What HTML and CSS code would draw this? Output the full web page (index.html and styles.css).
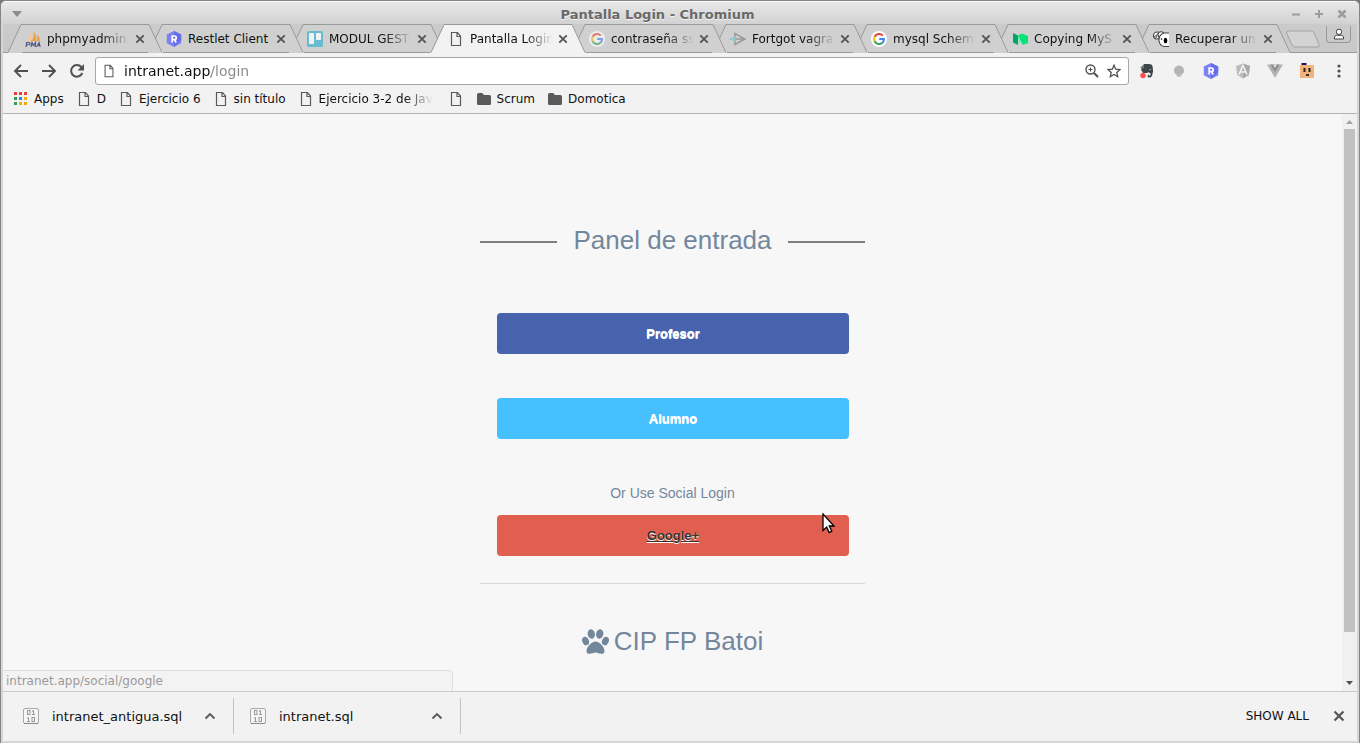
FILE: index.html
```html
<!DOCTYPE html>
<html lang="es">
<head>
<meta charset="utf-8">
<title>Pantalla Login - Chromium</title>
<link rel="stylesheet" href="styles.css">
</head>
<body>
<svg class="defs" aria-hidden="true">
  <symbol id="edge-left" viewBox="0 0 14 29"><path class="edge-fill" d="M0 29V28.500L13.500.5H14V29Z"/><path class="edge-line" d="M0 28.500L13 .5H14"/></symbol>
  <symbol id="edge-right" viewBox="0 0 14 29"><path class="edge-fill" d="M14 29V28.500L1 .5H0V29Z"/><path class="edge-line" d="M14 28.500L1 .5H0"/></symbol>
  <symbol id="close" viewBox="0 0 10 10"><path d="M1.300 1.300L8.700 8.700M8.700 1.300L1.300 8.700" fill="none" stroke="#555" stroke-width="1.900"/></symbol>
  <symbol id="file" viewBox="0 0 16 16"><path d="M3.500 1.500H9.500L12.500 5V14.500H3.500ZM9 1.500V5.500H12.500" fill="none" stroke="#5a5a5a" stroke-width="1.200"/></symbol>
  <symbol id="folder" viewBox="0 0 16 16"><path d="M1 3.500Q1 2 2.500 2H6.200L8 4H13.500Q15 4 15 5.500V12.500Q15 14 13.500 14H2.500Q1 14 1 12.500Z" fill="#5a5a5a"/></symbol>
  <symbol id="google" viewBox="0 0 16 16"><circle cx="8" cy="8" r="8" fill="#fff"/><g fill="none" stroke-width="2.100"><path d="M11.800 4.600A5 5 0 0 0 3.600 5.800" stroke="#ea4335"/><path d="M3.600 5.700A5 5 0 0 0 3.600 10.400" stroke="#fbbc05"/><path d="M3.600 10.300A5 5 0 0 0 11.400 11.700" stroke="#34a853"/><path d="M11.300 11.800A5 5 0 0 0 13 8H8.200" stroke="#4285f4"/></g></symbol>
  <symbol id="restlet" viewBox="0 0 16 16"><path d="M8 0L15.200 3.500V12.300L8 16L.8 12.300V3.500Z" fill="#7c81f4"/><path d="M8 0L15.200 3.500V9L8 16Z" fill="#666de9"/><path d="M6.200 11.500V5H8.500A1.600 1.600 0 0 1 8.500 8.500H6.200M8.300 8.500L10.200 11.500" fill="none" stroke="#fff" stroke-width="1.700"/></symbol>
  <symbol id="binary" viewBox="0 0 16 16"><rect x=".5" y=".5" width="15" height="15" rx="1.500" fill="#f5f5f5" stroke="#aaa"/><path d="M1 15.500H15" stroke="#888"/><g fill="none" stroke="#999"><rect x="4.500" y="2.500" width="2.500" height="4"/><path d="M9 3.500L10.500 2.500V6.500M9 6.500H12"/><path d="M4 10.500L5.500 9.500V13.500M4 13.500H7"/><rect x="9" y="9.500" width="2.500" height="4"/></g></symbol>
  <symbol id="chevron" viewBox="0 0 12 8"><path d="M1.500 6.500L6 2L10.500 6.500" fill="none" stroke="#5a5a5a" stroke-width="1.900"/></symbol>
</svg>
<div class="window">
  <header class="titlebar">
    <button class="wm" aria-label="Window menu"><svg width="10" height="6" viewBox="0 0 10 6"><path d="M0 0H10L5 6Z" fill="#8c8c8c"/></svg></button>
    <span class="titlebar-text">Pantalla Login - Chromium</span>
    <div class="wm-group">
      <button class="wm" aria-label="Minimize"><svg width="10" height="10" viewBox="0 0 10 10"><path d="M1 5.500H9" stroke="#9c9c9c" stroke-width="2"/></svg></button>
      <button class="wm" aria-label="Maximize"><svg width="10" height="10" viewBox="0 0 10 10"><path d="M1 5H9M5 1V9" stroke="#9c9c9c" stroke-width="2"/></svg></button>
      <button class="wm" aria-label="Close window"><svg width="10" height="10" viewBox="0 0 10 10"><path d="M1.500 1.500L8.500 8.500M8.500 1.500L1.500 8.500" stroke="#9c9c9c" stroke-width="2.600"/></svg></button>
    </div>
  </header>

  <nav class="tabstrip" aria-label="Tabs">
    <div class="tab tab-1"><svg class="edge"><use href="#edge-left"/></svg><div class="tab-body">
      <svg class="icon" viewBox="0 0 16 16"><path d="M2 10Q5 7 5.500 2Q6.500 6 6 10Z" fill="#f9c48a"/><path d="M6.500 10Q9.500 6 8.500 0Q12 5 11 10ZM11.500 10Q12.500 7 12 3Q15 7 15 10Z" fill="#f6a03c"/><path d="M1 16L1.700 11.500H4Q5.500 12 4.500 13.500L1.500 14M6 16L7 11.500L8.300 14.500L10.500 11.500L10.200 16M11.500 16L14 11.500L15.200 16M12.500 14.500H15" fill="none" stroke="#55558a" stroke-width="1.200"/></svg>
      <a class="tab-title" href="#">phpmyadmin</a><button class="tab-close" aria-label="Close tab"><svg><use href="#close"/></svg></button></div><svg class="edge"><use href="#edge-right"/></svg></div>
    <div class="tab tab-2"><svg class="edge"><use href="#edge-left"/></svg><div class="tab-body">
      <svg class="icon"><use href="#restlet"/></svg>
      <a class="tab-title" href="#">Restlet Client</a><button class="tab-close" aria-label="Close tab"><svg><use href="#close"/></svg></button></div><svg class="edge"><use href="#edge-right"/></svg></div>
    <div class="tab tab-3"><svg class="edge"><use href="#edge-left"/></svg><div class="tab-body">
      <svg class="icon" viewBox="0 0 16 16"><rect width="16" height="16" rx="1.500" fill="#67bcd0"/><rect x="2" y="2" width="5" height="11" rx=".8" fill="#f2f2f2"/><rect x="9" y="2" width="5" height="7" rx=".8" fill="#f2f2f2"/></svg>
      <a class="tab-title" href="#">MODUL GEST</a><button class="tab-close" aria-label="Close tab"><svg><use href="#close"/></svg></button></div><svg class="edge"><use href="#edge-right"/></svg></div>
    <div class="tab tab-active"><svg class="edge"><use href="#edge-left"/></svg><div class="tab-body">
      <svg class="icon"><use href="#file"/></svg>
      <a class="tab-title" href="#" aria-current="page">Pantalla Login</a><button class="tab-close" aria-label="Close tab"><svg><use href="#close"/></svg></button></div><svg class="edge"><use href="#edge-right"/></svg></div>
    <div class="tab tab-5"><svg class="edge"><use href="#edge-left"/></svg><div class="tab-body">
      <svg class="icon icon-faded"><use href="#google"/></svg>
      <a class="tab-title" href="#">contraseña ss</a><button class="tab-close" aria-label="Close tab"><svg><use href="#close"/></svg></button></div><svg class="edge"><use href="#edge-right"/></svg></div>
    <div class="tab tab-6"><svg class="edge"><use href="#edge-left"/></svg><div class="tab-body">
      <svg class="icon" viewBox="0 0 16 16"><path d="M5 6V2.500L15 8L5 13.500V10M5 8H14" fill="none" stroke="#999" stroke-width="1.600"/><path d="M0 8H6M3 6H6M3 10H6" stroke="#83c5c2" stroke-width="1.500"/></svg>
      <a class="tab-title" href="#">Fortgot vagra</a><button class="tab-close" aria-label="Close tab"><svg><use href="#close"/></svg></button></div><svg class="edge"><use href="#edge-right"/></svg></div>
    <div class="tab tab-7"><svg class="edge"><use href="#edge-left"/></svg><div class="tab-body">
      <svg class="icon"><use href="#google"/></svg>
      <a class="tab-title" href="#">mysql Schem</a><button class="tab-close" aria-label="Close tab"><svg><use href="#close"/></svg></button></div><svg class="edge"><use href="#edge-right"/></svg></div>
    <div class="tab tab-8"><svg class="edge"><use href="#edge-left"/></svg><div class="tab-body">
      <svg class="icon" viewBox="0 0 16 16"><path d="M1 2L6 4.500V14L1 11.500Z" fill="#00a866"/><path d="M6 4.500L11 11.500V14L6 9Z" fill="#6cf0ae"/><path d="M6 4.500L10 2.500L15.500 12L11 14Z" fill="#10df7c"/><path d="M10 2.500L16 5V13L10 9Z" fill="#05e576"/></svg>
      <a class="tab-title" href="#">Copying MyS</a><button class="tab-close" aria-label="Close tab"><svg><use href="#close"/></svg></button></div><svg class="edge"><use href="#edge-right"/></svg></div>
    <div class="tab tab-9"><svg class="edge"><use href="#edge-left"/></svg><div class="tab-body">
      <svg class="icon" viewBox="0 0 16 16"><g fill="#fff" stroke="#444" stroke-width="1.100"><circle cx="4" cy="4.500" r="3.500"/><circle cx="8" cy="3.800" r="3"/><path d="M16 2H11Q5.500 4 6 10Q7 15.500 12 15.500H16"/></g><path d="M1 6L5 3M2 8L4 5" stroke="#444"/><ellipse cx="12.500" cy="9.500" rx="1.800" ry="2.800"/><circle cx="8.500" cy="8" r=".8"/></svg>
      <a class="tab-title" href="#">Recuperar un</a><button class="tab-close" aria-label="Close tab"><svg><use href="#close"/></svg></button></div><svg class="edge"><use href="#edge-right"/></svg></div>
    <button class="new-tab" aria-label="New tab"><svg width="36" height="18" viewBox="0 0 36 18"><path d="M3 1H26Q28 1 29 2.500L34 14.500Q35 17 33 17H10Q8 17 7 15L1.500 3Q1 1 3 1Z" fill="#d3d3d3" stroke="#a2a2a2"/></svg></button>
    <button class="profile" aria-label="Profile"><svg width="12" height="12" viewBox="0 0 12 12"><circle cx="6" cy="3.800" r="2.700" fill="#fff" stroke="#444"/><path d="M1.500 11V9Q2 7.500 4 7Q6 8 8 7Q10 7.500 10.500 9V11Z" fill="#fff" stroke="#444"/></svg></button>
  </nav>

  <div class="toolbar">
    <button class="nav-button" aria-label="Back"><svg width="16" height="16" viewBox="0 0 16 16"><path d="M15 8H2.500M8 2L2 8L8 14" fill="none" stroke="#505050" stroke-width="1.900"/></svg></button>
    <button class="nav-button" aria-label="Forward"><svg width="16" height="16" viewBox="0 0 16 16"><path d="M1 8H13.500M8 2L14 8L8 14" fill="none" stroke="#505050" stroke-width="1.900"/></svg></button>
    <button class="nav-button" aria-label="Reload"><svg width="16" height="16" viewBox="0 0 16 16"><path d="M13.300 10A5.800 5.800 0 1 1 12.300 4L13.500 5.400" fill="none" stroke="#505050" stroke-width="2"/><path d="M15 1V7.500H8.500Z" fill="#505050"/></svg></button>
    <div class="omnibox">
      <svg class="site-icon"><use href="#file"/></svg>
      <input class="url" type="text" aria-label="Address" value="intranet.app/login">
      <button class="nav-button" aria-label="Zoom"><svg width="14" height="14" viewBox="0 0 14 14"><g fill="none" stroke="#505050"><circle cx="5.500" cy="5.500" r="4.500" stroke-width="1.400"/><path d="M3.500 5.500H7.500M5.500 3.500V7.500"/><path d="M9 9L13 13" stroke-width="2"/></g></svg></button>
      <button class="nav-button" aria-label="Bookmark this page"><svg width="14" height="14" viewBox="0 0 14 14"><path d="M7 1.200L8.700 5.200L13 5.600L9.800 8.400L10.700 12.700L7 10.500L3.300 12.700L4.200 8.400L1 5.600L5.300 5.200Z" fill="none" stroke="#505050" stroke-width="1.300"/></svg></button>
    </div>
    <div class="extensions">
      <button class="nav-button" aria-label="Evernote"><svg class="icon" viewBox="0 0 16 16"><path d="M5 1H10Q13 1 13.500 3Q15 8 13 13Q12 15 9 14.500Q8 11.500 10 11.500V12.500H11.500V10.500L9 9L8.500 10H4L2 6.500Q2 5 3.500 5H5Z" fill="#3d4648"/><path d="M1 5L5 1V5Z" fill="#707b7c"/><path d="M10.500 6.500H12" stroke="#bbb"/><circle cx="4" cy="12.500" r="2.700" fill="#ff4d51"/></svg></button>
      <button class="nav-button" aria-label="Extension"><svg class="icon" viewBox="0 0 16 16"><ellipse cx="8" cy="7.500" rx="5" ry="5" fill="#b4b4b4"/><path d="M5.500 11H10.500V13Q8 15 5.500 13Z" fill="#bebebe"/></svg></button>
      <button class="nav-button" aria-label="Restlet"><svg class="icon"><use href="#restlet"/></svg></button>
      <button class="nav-button" aria-label="Angular"><svg class="icon" viewBox="0 0 16 16"><path d="M8 .5L15 3L13.800 12L8 15.500L2.200 12L1 3Z" fill="#bcbcbc"/><path d="M8 .5L15 3L13.800 12L8 15.500Z" fill="#aaa"/><path d="M4 11.500L8 2.500L12 11.500M5.500 9H10.500" fill="none" stroke="#f1f1f1" stroke-width="1.600"/></svg></button>
      <button class="nav-button" aria-label="Vue"><svg class="icon" viewBox="0 0 16 16"><path d="M0 1.500H16L8 15Z" fill="#b2b2b2"/><path d="M3.500 1.500H12.500L8 9Z" fill="#8d8d8d"/><path d="M6 1.500H10L8 5Z" fill="#e6e6e6"/></svg></button>
      <button class="nav-button" aria-label="Postbox"><svg class="icon" viewBox="0 0 16 16"><rect x="1" y="2" width="14" height="13" fill="#f3b27c"/><path d="M2.500 1H7.500" stroke="#14145a" stroke-width="2"/><path d="M5.500 5V9M10.500 5V9" stroke="#222" stroke-width="2"/><path d="M7 12H10" stroke="#333" stroke-width="2"/></svg></button>
      <button class="nav-button" aria-label="Menu"><svg class="icon" viewBox="0 0 16 16"><g fill="#505050"><circle cx="8" cy="3" r="1.600"/><circle cx="8" cy="8" r="1.600"/><circle cx="8" cy="13" r="1.600"/></g></svg></button>
    </div>
  </div>

  <nav class="bookmarks" aria-label="Bookmarks">
    <a class="bookmark" href="#"><svg class="icon" viewBox="0 0 16 16"><path d="M1 1h3v3h-3zM6 1h3v3h-3zM11 1h3v3h-3z" fill="#ef3d36"/><path d="M1 6h3v3h-3zM1 11h3v3h-3z" fill="#2c9d51"/><path d="M6 6h3v3h-3z" fill="#2b86f0"/><path d="M11 6h3v3h-3zM6 11h3v3h-3zM11 11h3v3h-3z" fill="#f9ab00"/></svg>Apps</a>
    <a class="bookmark" href="#"><svg class="icon"><use href="#file"/></svg>D</a>
    <a class="bookmark" href="#"><svg class="icon"><use href="#file"/></svg>Ejercicio 6</a>
    <a class="bookmark" href="#"><svg class="icon"><use href="#file"/></svg>sin título</a>
    <a class="bookmark bookmark-long" href="#"><svg class="icon"><use href="#file"/></svg><span class="bookmark-text">Ejercicio 3-2 de Jav</span></a>
    <a class="bookmark" href="#" aria-label="Page"><svg class="icon"><use href="#file"/></svg></a>
    <a class="bookmark" href="#"><svg class="icon"><use href="#folder"/></svg>Scrum</a>
    <a class="bookmark" href="#"><svg class="icon"><use href="#folder"/></svg>Domotica</a>
  </nav>

  <div class="viewport">
    <main class="page">
      <section class="login">
        <h1 class="heading heading-ruled">Panel de entrada</h1>
        <a class="choice choice-teacher" href="#">Profesor</a>
        <a class="choice choice-student" href="#">Alumno</a>
        <p class="social-label">Or Use Social Login</p>
        <div class="social">
          <a class="choice choice-google" href="#">Google+</a>
          <svg class="pointer" width="14" height="21" viewBox="0 0 14 21"><path d="M1 1V17.500L4.700 14L7.200 19.500L9.800 18.200L7.300 13H12Z" fill="#fff" stroke="#000" stroke-width="1.300"/></svg>
        </div>
        <footer class="brand">
          <h2 class="heading"><svg class="paw" viewBox="0 0 27 25"><g fill="#73879c"><ellipse cx="9.300" cy="5" rx="3.600" ry="4.800" transform="rotate(-12 9.300 5)"/><ellipse cx="17.700" cy="5" rx="3.600" ry="4.800" transform="rotate(12 17.700 5)"/><ellipse cx="3.600" cy="12" rx="3.300" ry="4.400" transform="rotate(-22 3.600 12)"/><ellipse cx="23.400" cy="12" rx="3.300" ry="4.400" transform="rotate(22 23.400 12)"/><path d="M13.500 12.500C17.500 12.500 22.500 18 22.500 22C22.500 24 21.500 24.800 19.500 24.800C17 24.800 15.500 23.500 13.500 23.500C11.500 23.500 9.500 24.800 7.500 24.800C5.500 24.800 4.500 24 4.500 22C4.500 18 9.500 12.500 13.500 12.500Z"/></g></svg>CIP FP Batoi</h2>
        </footer>
      </section>
    </main>
    <div class="scrollbar" aria-hidden="true">
      <svg class="scroll-arrow" viewBox="0 0 15 15"><path d="M4 10H11L7.500 6Z" fill="#a3a3a3"/></svg>
      <div class="scroll-track"><div class="scroll-thumb"></div></div>
      <svg class="scroll-arrow" viewBox="0 0 15 15"><path d="M4 5H11L7.500 9Z" fill="#505050"/></svg>
    </div>
    <div class="status">intranet.app/social/google</div>
  </div>

  <footer class="downloads">
    <div class="download"><svg class="icon"><use href="#binary"/></svg><a class="download-name" href="#">intranet_antigua.sql</a><button class="nav-button" aria-label="Options"><svg width="12" height="8"><use href="#chevron"/></svg></button></div>
    <div class="download"><svg class="icon"><use href="#binary"/></svg><a class="download-name" href="#">intranet.sql</a><button class="nav-button" aria-label="Options"><svg width="12" height="8"><use href="#chevron"/></svg></button></div>
    <button class="show-all">SHOW ALL</button>
    <button class="nav-button" aria-label="Close downloads"><svg width="12" height="12"><use href="#close"/></svg></button>
  </footer>
</div>
</body>
</html>
```

FILE: styles.css
```css
* { box-sizing: border-box; }

body {
  margin: 0;
  background: #777;
  font-family: "DejaVu Sans", sans-serif;
  font-size: 12px;
  color: #111;
}

button {
  padding: 0;
  border: 0;
  background: none;
  color: inherit;
  font: inherit;
}

a { color: inherit; text-decoration: none; }
svg { display: block; flex: none; }
.defs { position: absolute; width: 0; height: 0; }
.icon { width: 16px; height: 16px; }
.icon-faded { opacity: 0.6; }

.window {
  display: flex;
  flex-direction: column;
  min-height: 100vh;
  border: 1px solid #858585;
  border-radius: 6px 6px 0 0;
  background: #d6d6d6;
  padding: 0 2px 2px;
  overflow: hidden;
}

.titlebar {
  display: grid;
  grid-template-columns: 1fr auto 1fr;
  align-items: center;
  height: 23px;
  margin: 0 -2px;
  padding: 2px 12px 0 11px;
  border-top: 1px solid #f8f8f8;
  background: linear-gradient(#e8e8e8, #d2d2d2);
}

.titlebar-text {
  padding-right: 44px;
  color: #696969;
  font-size: 13px;
  font-weight: bold;
  text-shadow: 0 1px 0 #f4f4f4;
}

.wm-group { display: flex; gap: 13px; justify-self: end; }
.wm { justify-self: start; }

.tabstrip {
  display: flex;
  height: 29px;
  padding-left: 5px;
  background: linear-gradient(#cbcbcb, #c8c8c8);
  box-shadow: inset 0 -1px #999;
  isolation: isolate;
}

.tab {
  --tab-color: #d0d0d0;
  position: relative;
  display: flex;
  flex: 0 1 154px;
  min-width: 0;
  margin-right: -13px;
}

.tab-1 { z-index: 8; }
.tab-2 { z-index: 7; }
.tab-3 { z-index: 6; }
.tab-active { --tab-color: #f2f2f2; z-index: 9; }
.tab-5 { z-index: 5; }
.tab-6 { z-index: 4; }
.tab-7 { z-index: 3; }
.tab-8 { z-index: 2; }
.tab-9 { z-index: 1; }

.edge { width: 14px; height: 29px; }
.edge-fill { fill: var(--tab-color); }
.edge-line { fill: none; stroke: #999; }

.tab-body {
  display: flex;
  flex: 1;
  align-items: center;
  min-width: 0;
  padding: 0 3px;
  border-top: 1px solid #999;
  border-bottom: 1px solid #999;
  background: var(--tab-color);
}

.tab-active .tab-body { border-bottom-color: #f2f2f2; }

.tab-title {
  flex: 1;
  min-width: 0;
  margin: 0 5px 0 6px;
  overflow: hidden;
  white-space: nowrap;
  mask-image: linear-gradient(to left, transparent, #000 28px);
}

.tab-2 .tab-title { mask-image: none; }
.tab-close svg { width: 10px; height: 10px; }
.new-tab { margin: 6px 0 0 8px; align-self: flex-start; }

.profile {
  display: grid;
  place-items: center;
  width: 25px;
  height: 17px;
  margin: 2px 6px 0 auto;
  border: 1px solid #999;
  border-top: 0;
  border-radius: 0 0 4px 4px;
}

.toolbar {
  display: flex;
  align-items: center;
  gap: 12px;
  padding: 4px 10px 0;
  background: #f2f2f2;
}

.omnibox {
  display: flex;
  flex: 1;
  align-items: center;
  gap: 8px;
  height: 28px;
  margin-left: -2px;
  padding: 0 7px 0 6px;
  border: 1px solid #a6a6a6;
  border-radius: 3px;
  background: #fff;
}

.site-icon { width: 14px; height: 14px; }

.url {
  flex: 1;
  min-width: 0;
  padding: 0;
  border: 0;
  outline: 0;
  background: linear-gradient(to right, #111 87px, #888 87px) text;
  color: transparent;
  font: 14px/20px "DejaVu Sans", sans-serif;
}

.extensions { display: flex; gap: 16px; margin-left: -2px; }

.bookmarks {
  display: flex;
  align-items: center;
  gap: 12px;
  height: 29px;
  padding: 0 10px;
  border-bottom: 1px solid #b4b4b4;
  background: #f2f2f2;
}

.bookmark { display: flex; align-items: center; gap: 5px; white-space: nowrap; }
.bookmark-long { width: 138px; }
.bookmark-text {
  overflow: hidden;
  mask-image: linear-gradient(to left, transparent, #000 28px);
}

.viewport { position: relative; display: flex; flex: 1; background: #f7f7f7; }

.page {
  flex: 1;
  padding: 108px 16px 32px;
  color: #73879c;
  font-family: "Liberation Sans", Arial, sans-serif;
}

.login {
  display: flex;
  flex-direction: column;
  max-width: 385px;
  margin: 0 auto;
}

.heading {
  display: flex;
  align-items: center;
  justify-content: center;
  gap: 5px;
  margin: 0;
  font-size: 26px;
  font-weight: normal;
  line-height: 36px;
}

.heading-ruled { justify-content: space-between; margin-bottom: 55px; }
.heading-ruled::before,
.heading-ruled::after { content: ""; width: 20%; height: 2px; margin-top: 4px; background: #7e7e7e; }

.choice {
  display: block;
  margin: 0 16px 44px 17px;
  border-radius: 4px;
  color: #fff;
  font-size: 13px;
  font-weight: bold;
  line-height: 41px;
  text-align: center;
  text-shadow: 0 1px 0 #fff;
}

.choice-teacher { background: #4863ae; }
.choice-student { background: #46c0fe; }
.choice-google { margin-bottom: 27px; background: #e15f4f; color: #333; text-decoration: underline; }

.social-label { margin: 0 0 12px; font-size: 14px; line-height: 20px; text-align: center; }
.social { position: relative; }
.pointer { position: absolute; top: -2px; right: 29px; }
.brand { padding-top: 39px; border-top: 1px solid #d8d8d8; }
.paw { width: 27px; height: 25px; }

.scrollbar { display: flex; flex-direction: column; width: 15px; background: #f0f0f0; }
.scroll-arrow { width: 15px; height: 15px; }
.scroll-track { flex: 1; padding: 0 2px; }
.scroll-thumb { height: 92%; background: #c1c1c1; }

.status {
  position: absolute;
  bottom: 0;
  left: 0;
  width: 450px;
  max-width: 100%;
  padding-left: 3px;
  border: 1px solid #dedede;
  border-width: 1px 1px 0 0;
  border-radius: 0 4px 0 0;
  background: #f3f3f3;
  color: #999;
  line-height: 20px;
}

.downloads {
  display: flex;
  align-items: center;
  height: 50px;
  padding: 0 12px 2px 0;
  border-top: 1px solid #cacaca;
  background: #f2f2f2;
}

.download {
  display: flex;
  align-items: center;
  width: 227px;
  height: 36px;
  padding: 0 17px 0 16px;
  border-right: 1px solid #c3c3c3;
}

.download:first-child { width: 231px; padding-left: 20px; }
.download-name { flex: 1; margin-left: 13px; padding-top: 2px; font-size: 13px; }
.show-all { margin: 0 24px 0 auto; }
```
